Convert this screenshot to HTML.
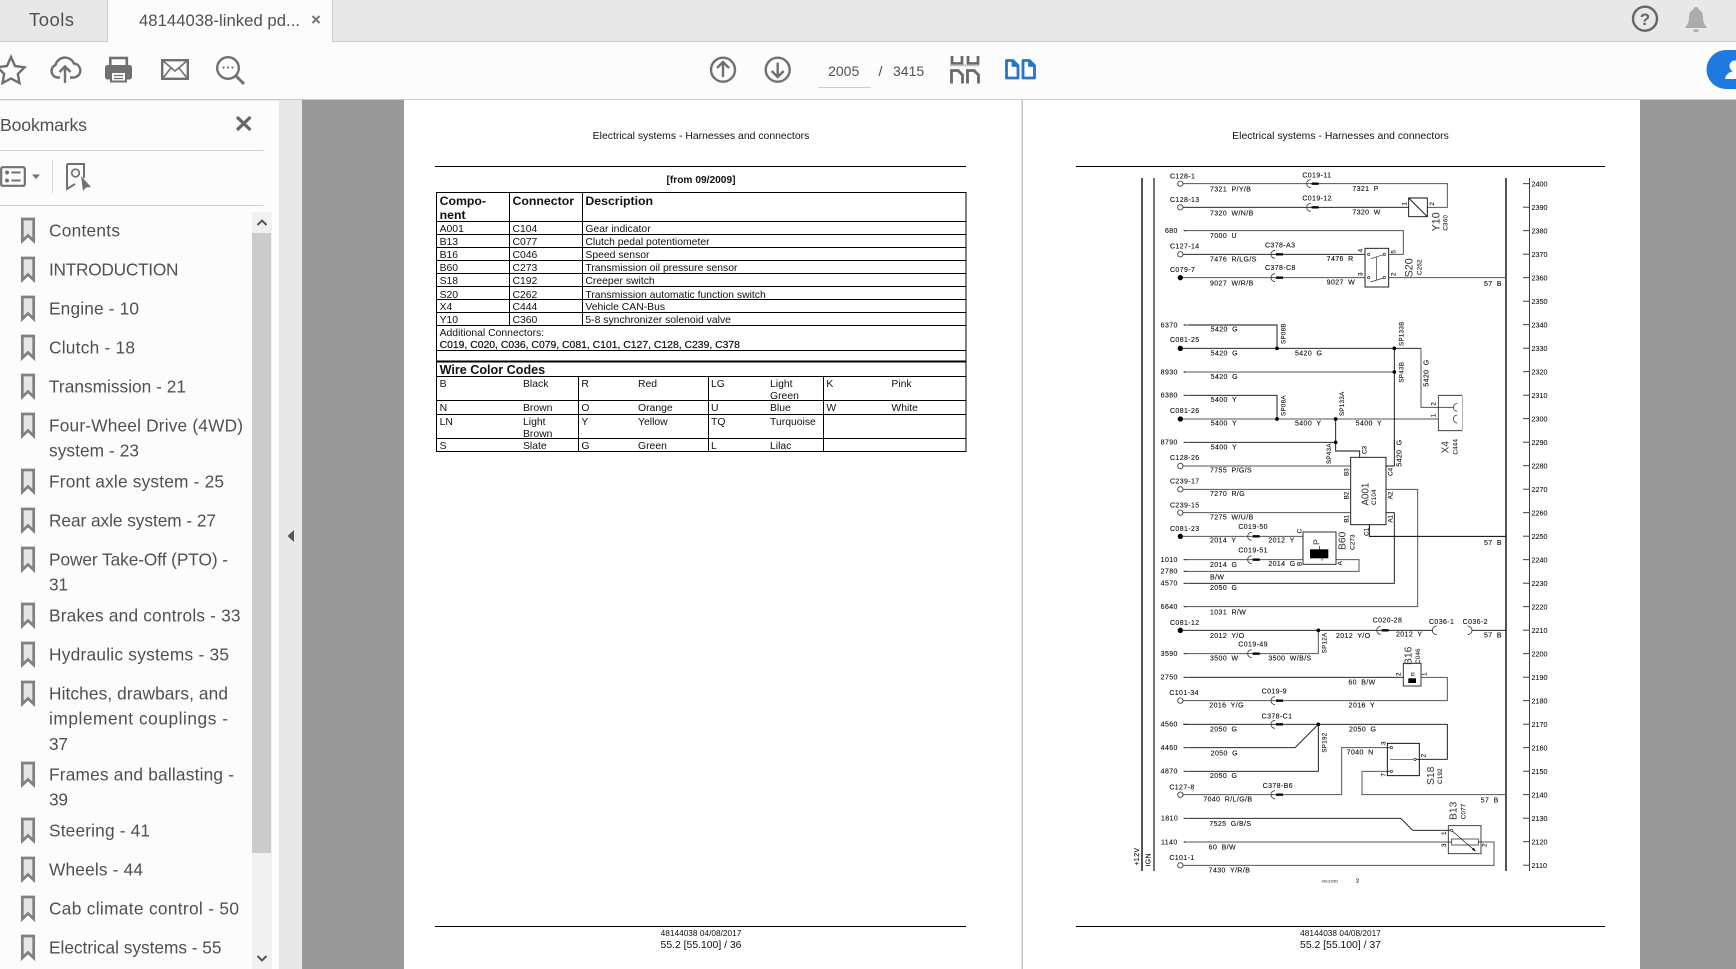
<!DOCTYPE html>
<html lang="en"><head><meta charset="utf-8"><title>48144038-linked pdf</title>
<style>
html,body{margin:0;padding:0;width:1736px;height:969px;overflow:hidden;background:#fcfcfc}
svg{display:block;position:absolute;left:0;top:0;font-family:"Liberation Sans",Arial,sans-serif}
.ui{fill:#505050}
.s{font-size:17.3px;fill:#505050}
.d{fill:none;stroke:#707070;stroke-width:2.4}
.doc{fill:#111;font-size:10.4px}
.b{font-weight:bold}
.g{fill:none;stroke:#555;stroke-width:3}
.k{fill:none;stroke:#0a0a0a;stroke-width:2.7}
.w text{font-size:21px;letter-spacing:1.2px;word-spacing:6px;fill:#111;stroke:#111;stroke-width:.35}
.w text.big{font-size:32px;letter-spacing:0;fill:#333;stroke:none}
.w text.sm{font-size:19px;letter-spacing:.4px;stroke-width:.2}
.w text.pin{font-size:19px;letter-spacing:0}
.w text.sp{font-size:18.5px;letter-spacing:1px;word-spacing:0}
.tick text{font-size:7.2px;fill:#111;stroke:#111;stroke-width:.08}
</style></head><body>
<svg width="1736" height="969" viewBox="0 0 1736 969" xmlns="http://www.w3.org/2000/svg">
<defs>
<g id="conn"><path d="M12 -12A12 12 0 0 0 12 12" fill="none" stroke="#333" stroke-width="2.4"/><rect x="15" y="-3.5" width="21" height="7" fill="#000"/></g>
<path id="arr" d="M0 0L7 -2.5V-1.2H16V1.2H7V2.5Z" fill="#222"/>
<circle id="oc" r="8" fill="#fff" stroke="#333" stroke-width="2.6"/>
<circle id="fc" r="8" fill="#000"/>
<circle id="dot" r="5.5" fill="#000"/>
<circle id="sc" r="3.5" fill="#fff" stroke="#222" stroke-width="2"/>
<path id="bm" d="M22.3 0V22L28 16.5L33.7 22V0Z" fill="#e6e6e6" stroke="#808080" stroke-width="2.7"/>
</defs>

<!-- chrome backgrounds -->
<rect width="1736" height="969" fill="#fcfcfc"/>
<rect width="1736" height="41" fill="#e8e8e8"/>
<rect y="41" width="1736" height="1" fill="#c9c9c9"/>
<rect x="107" y="0" width="1" height="41" fill="#c9c9c9"/>
<rect x="108" y="0" width="224" height="43" fill="#fcfcfc"/>
<rect x="332" y="0" width="1" height="41" fill="#c9c9c9"/>
<rect y="99" width="1736" height="1.4" fill="#c9c9c9"/>

<text x="29" y="26" class="ui" font-size="18.4" textLength="45">Tools</text>
<text x="139" y="26" class="ui" font-size="16.7" textLength="161">48144038-linked pd...</text>
<path d="M312.5 16L319.5 23M319.5 16L312.5 23" stroke="#777" stroke-width="2" fill="none"/>

<!-- help / bell -->
<circle cx="1645" cy="18.7" r="12" fill="none" stroke="#666" stroke-width="2.4"/>
<text x="1645" y="25" text-anchor="middle" font-size="17" font-weight="bold" fill="#666">?</text>
<path d="M1696 7C1698 7 1698.5 8.5 1698.5 9.5C1702 11 1703 14 1703 18C1703 23 1705 24.500 1706.500 27V28H1685.500V27C1687 24.500 1689 23 1689 18C1689 14 1690 11 1693.500 9.500C1693.500 8.500 1694 7 1696 7ZM1693 29.500H1699C1699 31 1698 32 1696 32C1694 32 1693 31 1693 29.500Z" fill="#ababab"/>

<!-- toolbar icons -->
<polygon class="d" points="11,57 15,66 24.500,67.300 17.800,74 19.500,83 11,78.500 2.500,83 4.200,74 -2.500,67.300 7,66" stroke-width="2"/>
<path class="d" d="M60 77.500H58A6.500 6.500 0 0 1 55.500 65A9.800 9.800 0 0 1 74 63.500A7 7 0 0 1 72.500 77.500H70"/>
<path class="d" d="M65 83V67M59.500 72L65 66.500L70.500 72"/>
<rect x="110.300" y="58" width="16.500" height="9" fill="#fcfcfc" stroke="#707070" stroke-width="2.6"/>
<rect x="105" y="65" width="27" height="14.500" rx="2.500" fill="#707070"/>
<rect x="111" y="72" width="15" height="9.500" fill="#fcfcfc" stroke="#707070" stroke-width="2"/>
<path d="M114 75.500H123M114 78.500H123" stroke="#707070" stroke-width="1.2"/>
<rect x="162.200" y="60.200" width="25.600" height="18.600" fill="none" stroke="#707070" stroke-width="2.400"/>
<path d="M162.500 60.500L175 71L187.500 60.500M162.500 78.500L171 68M187.500 78.500L179 68" fill="none" stroke="#707070" stroke-width="1.6"/>
<circle class="d" cx="228" cy="68" r="10.800" stroke-width="2.700"/>
<path d="M236 76L244 84" stroke="#707070" stroke-width="3" fill="none"/>
<circle cx="223.500" cy="67.500" r="1.100" fill="#707070"/><circle cx="228" cy="67.500" r="1.100" fill="#707070"/><circle cx="232.500" cy="67.500" r="1.100" fill="#707070"/>

<circle class="d" cx="723" cy="69.700" r="12" stroke-width="2.700"/>
<path class="d" d="M723 77V62.500M717 68L723 62L729 68" stroke-width="3"/>
<circle class="d" cx="777.700" cy="69.700" r="12" stroke-width="2.700"/>
<path class="d" d="M777.700 62.500V77M771.700 71L777.700 77L783.700 71" stroke-width="3"/>
<text x="843.700" y="76" text-anchor="middle" class="ui" font-size="14">2005</text>
<rect x="818" y="87" width="53" height="1" fill="#cfcfcf"/>
<text x="878.500" y="76" class="ui" font-size="14.200">/</text>
<text x="893" y="76" class="ui" font-size="14">3415</text>
<path d="M952 56V63.500H962V56M968 56V63.500H978V56" fill="none" stroke="#6a6a6a" stroke-width="2.800"/>
<rect x="950" y="64.500" width="29" height="1.800" fill="#c4c4c4"/>
<path d="M951.500 83.500V70.500H958L962.500 75V83.500M967.500 83.500V70.500H974L978.500 75V83.500" fill="none" stroke="#6a6a6a" stroke-width="2.800"/>
<path d="M1006.500 60.500H1013L1018 65.500V78H1006.500ZM1013 60.500V65.500H1018M1023 60.500H1029.500L1034.500 65.500V78H1023ZM1029.500 60.500V65.500H1034.500" fill="none" stroke="#2a74c8" stroke-width="2.800" stroke-linejoin="round"/>
<path d="M1736 50H1726A19.500 19.500 0 0 0 1726 89H1736Z" fill="#1f7ae0"/>
<circle cx="1735" cy="66" r="5.500" fill="#fff"/><path d="M1725 79C1726 73 1731 71 1736 71V79Z" fill="#fff"/>

<!-- sidebar head -->
<text x="0" y="131" class="ui" font-size="17.700" textLength="87">Bookmarks</text>
<path d="M237 117L250.500 130M250.500 117L237 130" stroke="#666" stroke-width="3.200" fill="none"/>
<rect y="150" width="263.500" height="1" fill="#cfcfcf"/>
<rect y="205" width="263.500" height="1" fill="#cfcfcf"/>
<rect x="1.200" y="167.200" width="23.600" height="18.600" rx="1.500" fill="none" stroke="#707070" stroke-width="2.200"/>
<circle cx="7" cy="172.500" r="2" fill="#707070"/><circle cx="7" cy="180.500" r="2" fill="#707070"/>
<path d="M11.500 172.500H20.500M11.500 180.500H20.500" stroke="#707070" stroke-width="2"/>
<polygon points="32,174.500 40,174.500 36,179" fill="#707070"/>
<rect x="52" y="160" width="1" height="33" fill="#d8d8d8"/>
<path d="M67 164H84V178M75 184L67 189V164" fill="none" stroke="#707070" stroke-width="2"/>
<circle cx="75.500" cy="173" r="3.800" fill="none" stroke="#707070" stroke-width="1.700"/>
<polygon points="81,176 91,187 86,187.500 83,191" fill="#707070"/>

<!-- bookmark list -->
<use href="#bm" y="219"/><text x="49" y="236.500" class="s" textLength="71">Contents</text>
<use href="#bm" y="258"/><text x="49" y="275.500" class="s" textLength="129.500">INTRODUCTION</text>
<use href="#bm" y="297"/><text x="49" y="314.500" class="s" textLength="90">Engine - 10</text>
<use href="#bm" y="336"/><text x="49" y="353.500" class="s" textLength="86">Clutch - 18</text>
<use href="#bm" y="375"/><text x="49" y="392.500" class="s" textLength="137">Transmission - 21</text>
<use href="#bm" y="414"/><text x="49" y="431.500" class="s" textLength="194">Four-Wheel Drive (4WD)</text><text x="49" y="456.500" class="s" textLength="90">system - 23</text>
<use href="#bm" y="470"/><text x="49" y="487.500" class="s" textLength="175">Front axle system - 25</text>
<use href="#bm" y="509"/><text x="49" y="526.500" class="s" textLength="167">Rear axle system - 27</text>
<use href="#bm" y="548"/><text x="49" y="565.500" class="s" textLength="179">Power Take-Off (PTO) -</text><text x="49" y="590.500" class="s" textLength="19">31</text>
<use href="#bm" y="604"/><text x="49" y="621.500" class="s" textLength="191.500">Brakes and controls - 33</text>
<use href="#bm" y="643"/><text x="49" y="660.500" class="s" textLength="180">Hydraulic systems - 35</text>
<use href="#bm" y="682"/><text x="49" y="699.500" class="s" textLength="179">Hitches, drawbars, and</text><text x="49" y="724.500" class="s" textLength="179">implement couplings -</text><text x="49" y="750" class="s" textLength="19">37</text>
<use href="#bm" y="763"/><text x="49" y="780.500" class="s" textLength="185">Frames and ballasting -</text><text x="49" y="805.500" class="s" textLength="19">39</text>
<use href="#bm" y="819"/><text x="49" y="836.500" class="s" textLength="101">Steering - 41</text>
<use href="#bm" y="858"/><text x="49" y="875.500" class="s" textLength="94">Wheels - 44</text>
<use href="#bm" y="897"/><text x="49" y="914.500" class="s" textLength="190">Cab climate control - 50</text>
<use href="#bm" y="936"/><text x="49" y="953.500" class="s" textLength="172.500">Electrical systems - 55</text>

<!-- sidebar scrollbar -->
<rect x="252" y="212" width="20" height="757" fill="#f1f1f1"/>
<rect x="252" y="233" width="19" height="620" fill="#cbcbcb"/>
<path d="M257.500 225L262 220.500L266.500 225" fill="none" stroke="#555" stroke-width="2"/>
<path d="M257.500 956L262 960.500L266.500 956" fill="none" stroke="#555" stroke-width="2"/>

<!-- document area -->
<rect x="279" y="100" width="23" height="869" fill="#e8e8e8"/>
<polygon points="287.500,536 294,530 294,542" fill="#555"/>
<rect x="302" y="100" width="102" height="869" fill="#999"/>
<rect x="1640" y="100" width="96" height="869" fill="#999"/>
<rect x="404" y="100" width="1236" height="869" fill="#fff"/>
<rect x="1021.500" y="100" width="1.500" height="869" fill="#c4c4c4"/>

<!-- PAGE 1 -->
<g class="doc">
<text x="701" y="139" text-anchor="middle" font-size="10.430">Electrical systems - Harnesses and connectors</text>
<text x="1340.500" y="139" text-anchor="middle" font-size="10.430">Electrical systems - Harnesses and connectors</text>
<text x="701" y="183" text-anchor="middle" class="b" font-size="10.200">[from 09/2009]</text>
<text x="439.600" y="205" class="b" font-size="12.300">Compo-</text>
<text x="439.600" y="219" class="b" font-size="12.300">nent</text>
<text x="512.500" y="205" class="b" font-size="12.300">Connector</text>
<text x="585.400" y="205" class="b" font-size="12.300">Description</text>
<text x="439.600" y="232">A001</text><text x="512.500" y="232">C104</text><text x="585.400" y="232">Gear indicator</text>
<text x="439.600" y="245">B13</text><text x="512.500" y="245">C077</text><text x="585.400" y="245">Clutch pedal potentiometer</text>
<text x="439.600" y="258">B16</text><text x="512.500" y="258">C046</text><text x="585.400" y="258">Speed sensor</text>
<text x="439.600" y="271">B60</text><text x="512.500" y="271">C273</text><text x="585.400" y="271">Transmission oil pressure sensor</text>
<text x="439.600" y="284">S18</text><text x="512.500" y="284">C192</text><text x="585.400" y="284">Creeper switch</text>
<text x="439.600" y="298">S20</text><text x="512.500" y="298">C262</text><text x="585.400" y="298">Transmission automatic function switch</text>
<text x="439.600" y="310">X4</text><text x="512.500" y="310">C444</text><text x="585.400" y="310">Vehicle CAN-Bus</text>
<text x="439.600" y="323">Y10</text><text x="512.500" y="323">C360</text><text x="585.400" y="323">5-8 synchronizer solenoid valve</text>
<text x="439.600" y="336">Additional Connectors:</text>
<text x="439.600" y="348" stroke="#111" stroke-width=".2">C019, C020, C036, C079, C081, C101, C127, C128, C239, C378</text>
<text x="439.600" y="374" class="b" font-size="12.600">Wire Color Codes</text>
<text x="439.600" y="387">B</text><text x="523" y="387">Black</text><text x="581.400" y="387">R</text><text x="638" y="387">Red</text><text x="711" y="387">LG</text><text x="770" y="387">Light</text><text x="770" y="399">Green</text><text x="826.400" y="387">K</text><text x="891.400" y="387">Pink</text>
<text x="439.600" y="411">N</text><text x="523" y="411">Brown</text><text x="581.400" y="411">O</text><text x="638" y="411">Orange</text><text x="711" y="411">U</text><text x="770" y="411">Blue</text><text x="826.400" y="411">W</text><text x="891.400" y="411">White</text>
<text x="439.600" y="425">LN</text><text x="523" y="425">Light</text><text x="523" y="437">Brown</text><text x="581.400" y="425">Y</text><text x="638" y="425">Yellow</text><text x="711" y="425">TQ</text><text x="770" y="425">Turquoise</text>
<text x="439.600" y="449">S</text><text x="523" y="449">Slate</text><text x="581.400" y="449">G</text><text x="638" y="449">Green</text><text x="711" y="449">L</text><text x="770" y="449">Lilac</text>
<text x="701" y="936" text-anchor="middle" font-size="8.300">48144038 04/08/2017</text>
<text x="701" y="948" text-anchor="middle">55.2 [55.100] / 36</text>
<text x="1340.500" y="936" text-anchor="middle" font-size="8.300">48144038 04/08/2017</text>
<text x="1340.500" y="948" text-anchor="middle">55.2 [55.100] / 37</text>
</g>
<g stroke="#000" stroke-width="1" fill="none">
<path d="M435 166.500H966M1076 166.500H1605M435 926.500H966M1076 926.500H1605"/>
<path d="M436.500 192.500H966V451.500H436.500ZM436.500 221.500H966M436.500 234.500H966M436.500 247.500H966M436.500 260.500H966M436.500 273.500H966M436.500 286.500H966M436.500 299.500H966M436.500 312.500H966M436.500 325.500H966M436.500 350.500H966M436.500 376.500H966M436.500 400.500H966M436.500 414.500H966M436.500 438.500H966"/>
<path d="M509.500 192.500V325.500M582.500 192.500V325.500M578.500 376.500V451.500M708.500 376.500V451.500M823.500 376.500V451.500"/>
<path d="M436.500 361.500H966" stroke-width="2"/>
</g>

<!-- WIRING DIAGRAM -->
<g fill="none" stroke="#2a2a2a">
<path d="M1142 178V871" stroke-width="1.600"/><path d="M1154 178V871" stroke-width="1.300"/><path d="M1506 178V871" stroke-width="1.600"/>
</g>
<g class="tick">
<path d="M1529.500 178V871" stroke="#111" stroke-width=".8" fill="none"/>
<path d="M1523 183.700h6M1523 207.200h6M1523 230.700h6M1523 254.200h6M1523 277.700h6M1523 301.200h6M1523 324.700h6M1523 348.200h6M1523 371.700h6M1523 395.200h6M1523 418.700h6M1523 442.200h6M1523 465.700h6M1523 489.200h6M1523 512.700h6M1523 536.200h6M1523 559.700h6M1523 583.200h6M1523 606.700h6M1523 630.200h6M1523 653.700h6M1523 677.200h6M1523 700.700h6M1523 724.200h6M1523 747.700h6M1523 771.200h6M1523 794.700h6M1523 818.200h6M1523 841.700h6M1523 865.200h6" stroke="#222" stroke-width=".8" fill="none"/>
<text x="1531.500" y="186.300">2400</text><text x="1531.500" y="209.800">2390</text><text x="1531.500" y="233.300">2380</text><text x="1531.500" y="256.800">2370</text><text x="1531.500" y="280.300">2360</text><text x="1531.500" y="303.800">2350</text><text x="1531.500" y="327.300">2340</text><text x="1531.500" y="350.800">2330</text><text x="1531.500" y="374.300">2320</text><text x="1531.500" y="397.800">2310</text><text x="1531.500" y="421.300">2300</text><text x="1531.500" y="444.800">2290</text><text x="1531.500" y="468.300">2280</text><text x="1531.500" y="491.800">2270</text><text x="1531.500" y="515.300">2260</text><text x="1531.500" y="538.800">2250</text><text x="1531.500" y="562.300">2240</text><text x="1531.500" y="585.800">2230</text><text x="1531.500" y="609.300">2220</text><text x="1531.500" y="632.800">2210</text><text x="1531.500" y="656.300">2200</text><text x="1531.500" y="679.800">2190</text><text x="1531.500" y="703.300">2180</text><text x="1531.500" y="726.800">2170</text><text x="1531.500" y="750.300">2160</text><text x="1531.500" y="773.800">2150</text><text x="1531.500" y="797.300">2140</text><text x="1531.500" y="820.800">2130</text><text x="1531.500" y="844.300">2120</text><text x="1531.500" y="867.800">2110</text>
</g>

<!-- group A : upper diagram -->
<g class="w" transform="translate(1120 160) scale(.33333)">
<path class="g" d="M189 71H982V142H922"/>
<path class="k" d="M189 142H866M866 114H922V170H866ZM866 114L922 170"/>
<path class="g" d="M205 212H850V283H806"/>
<path class="k" d="M189 283H735"/>
<path class="g" d="M189 353H735M806 353H1158"/>
<rect x="735" y="265" width="71" height="116" fill="none" stroke="#222" stroke-width="3"/>
<path d="M752 296L790 284M752 366L790 354M770 290V360" stroke="#333" stroke-width="2" fill="none"/>
<use href="#sc" x="746" y="283"/><use href="#sc" x="793" y="283"/><use href="#sc" x="746" y="353"/><use href="#sc" x="793" y="353"/>
<path class="k" d="M205 495H471V565M189 565H903"/>
<path class="g" d="M903 565V742H1000M205 636H823"/>
<path class="k" d="M205 706H471V777"/>
<path class="g" d="M189 777H955"/>
<path class="k" d="M647 777V847M205 847H647"/>
<path class="k" d="M823 565V870" stroke-width="2"/>
<path d="M955 706H1027M955 706V812H1027" fill="none" stroke="#222" stroke-width="2.400"/><path d="M1027 706V812" stroke="#888" stroke-width="2" fill="none"/>
<path d="M1012 730A12 12 0 0 0 1012 754M1012 765A12 12 0 0 0 1012 789" fill="none" stroke="#333" stroke-width="2.200"/>
<use href="#oc" x="181" y="71"/><use href="#oc" x="181" y="142"/><use href="#oc" x="181" y="283"/><use href="#fc" x="181" y="353"/><use href="#fc" x="181" y="565"/><use href="#fc" x="181" y="777"/>
<use href="#dot" x="471" y="565"/><use href="#dot" x="823" y="565"/><use href="#dot" x="823" y="636"/><use href="#dot" x="471" y="777"/><use href="#dot" x="647" y="777"/><use href="#dot" x="647" y="847"/>
<use href="#conn" x="560" y="71"/><use href="#conn" x="560" y="142"/><use href="#conn" x="453" y="283"/><use href="#conn" x="453" y="353"/>
<use href="#arr" x="189" y="212"/><use href="#arr" x="189" y="495"/><use href="#arr" x="189" y="636"/><use href="#arr" x="189" y="706"/><use href="#arr" x="189" y="847"/>
<text x="150" y="56">C128-1</text><text x="547" y="52">C019-11</text><text x="270" y="95">7321 P/Y/B</text><text x="697" y="93">7321 P</text>
<text x="150" y="126">C128-13</text><text x="547" y="122">C019-12</text><text x="270" y="166">7320 W/N/B</text><text x="697" y="163">7320 W</text>
<text x="135" y="219">680</text><text x="270" y="234">7000 U</text>
<text x="150" y="266">C127-14</text><text x="435" y="262">C378-A3</text><text x="270" y="305">7476 R/LG/S</text><text x="620" y="303">7476 R</text>
<text x="150" y="336">C079-7</text><text x="435" y="330">C378-C8</text><text x="270" y="377">9027 W/R/B</text><text x="620" y="374">9027 W</text><text x="1092" y="378">57 B</text>
<text x="122" y="502">6370</text><text x="272" y="514">5420 G</text><text x="150" y="546">C081-25</text><text x="272" y="587">5420 G</text><text x="525" y="587">5420 G</text>
<text x="122" y="643">8930</text><text x="272" y="657">5420 G</text><text x="122" y="713">6380</text><text x="272" y="726">5400 Y</text>
<text x="150" y="759">C081-26</text><text x="272" y="797">5400 Y</text><text x="525" y="797">5400 Y</text><text x="707" y="797">5400 Y</text>
<text x="122" y="854">8790</text><text x="272" y="868">5400 Y</text>
<text class="pin" transform="rotate(-90 860 137)" x="860" y="137">1</text>
<text class="pin" transform="rotate(-90 942 137)" x="942" y="137">2</text>
<text class="big" transform="rotate(-90 958 214)" x="958" y="214">Y10</text>
<text class="sm" transform="rotate(-90 982 212)" x="982" y="212">C360</text>
<text class="pin" transform="rotate(-90 727 277)" x="727" y="277">4</text>
<text class="pin" transform="rotate(-90 826 281)" x="826" y="281">5</text>
<text class="pin" transform="rotate(-90 727 348)" x="727" y="348">3</text>
<text class="pin" transform="rotate(-90 826 348)" x="826" y="348">2</text>
<text class="big" transform="rotate(-90 878 352)" x="878" y="352">S20</text>
<text class="sm" transform="rotate(-90 905 345)" x="905" y="345">C262</text>
<text class="sp" transform="rotate(-90 496 552)" x="496" y="552">SP08B</text>
<text class="sp" transform="rotate(-90 850 558)" x="850" y="558">SP133B</text>
<text class="sp" transform="rotate(-90 850 668)" x="850" y="668">SP43B</text>
<text transform="rotate(-90 925 680)" x="925" y="680">5420 G</text>
<text class="sp" transform="rotate(-90 496 768)" x="496" y="768">SP08A</text>
<text class="sp" transform="rotate(-90 672 768)" x="672" y="768">SP133A</text>
<text class="pin" transform="rotate(-90 947 737)" x="947" y="737">2</text>
<text class="pin" transform="rotate(-90 947 772)" x="947" y="772">1</text>
</g>

<!-- group B : middle diagram -->
<g class="w" transform="translate(1120 440) scale(.33333)">
<path class="k" d="M647 7V33H719V52" stroke-width="2.400"/>
<path class="k" d="M823 0V78H798" stroke-width="2.400"/>
<path class="g" d="M189 78H692"/>
<path class="g" d="M189 148H692M798 148H893V500H205"/>
<path class="g" d="M189 218H692"/>
<path class="k" d="M798 218H823V430H205"/>
<rect x="692" y="52" width="106" height="202" fill="none" stroke="#222" stroke-width="3"/>
<path class="g" d="M189 289H548"/>
<path class="g" d="M205 359H548M648 359H717V394H205"/>
<rect x="549" y="276" width="99" height="97" fill="none" stroke="#333" stroke-width="3"/>
<rect x="570" y="328" width="55" height="27" fill="#000"/>
<path d="M598 318V328M606 355V362" stroke="#000" stroke-width="2"/>
<path d="M748 254V289H1158" fill="none" stroke="#000" stroke-width="3"/>
<path class="k" d="M189 571H938"/>
<path d="M950 558A13 13 0 0 0 950 584M1043 558A13 13 0 0 1 1043 584" fill="none" stroke="#222" stroke-width="2.400"/>
<path class="k" d="M1056 571H1158"/>
<path class="g" d="M205 641H595V571"/>
<path class="k" d="M205 712H850" stroke-width="2.200"/>
<use href="#oc" x="181" y="78"/><use href="#oc" x="181" y="148"/><use href="#oc" x="181" y="218"/><use href="#fc" x="181" y="289"/><use href="#fc" x="181" y="571"/>
<use href="#dot" x="595" y="571"/>
<use href="#conn" x="383" y="289"/><use href="#conn" x="383" y="359"/><use href="#conn" x="383" y="641"/><use href="#conn" x="770" y="571"/>
<use href="#arr" x="189" y="359"/><use href="#arr" x="189" y="394"/><use href="#arr" x="189" y="430"/><use href="#arr" x="189" y="500"/><use href="#arr" x="189" y="641"/><use href="#arr" x="189" y="712"/>
<text x="150" y="60">C128-26</text><text x="270" y="98">7755 P/G/S</text><text x="150" y="131">C239-17</text><text x="270" y="168">7270 R/G</text>
<text x="150" y="202">C239-15</text><text x="270" y="239">7275 W/U/B</text><text x="150" y="273">C081-23</text><text x="355" y="267">C019-50</text>
<text x="270" y="308">2014 Y</text><text x="445" y="307">2012 Y</text><text x="355" y="337">C019-51</text><text x="122" y="366">1010</text>
<text x="270" y="381">2014 G</text><text x="445" y="378">2014 G</text><text x="122" y="401">2780</text><text x="270" y="418">B/W</text>
<text x="122" y="437">4570</text><text x="270" y="450">2050 G</text><text x="122" y="507">6640</text><text x="270" y="523">1031 R/W</text>
<text x="150" y="555">C081-12</text><text x="758" y="548">C020-28</text><text x="927" y="552">C036-1</text><text x="1028" y="552">C036-2</text>
<text x="270" y="594">2012 Y/O</text><text x="648" y="594">2012 Y/O</text><text x="828" y="590">2012 Y</text><text x="1092" y="593">57 B</text><text x="1092" y="315">57 B</text>
<text x="355" y="619">C019-49</text><text x="122" y="648">3590</text><text x="270" y="662">3500 W</text><text x="445" y="662">3500 W/B/S</text><text x="122" y="718">2750</text>
<text class="sp" transform="rotate(-90 633 72)" x="633" y="72">SP43A</text>
<text class="pin" transform="rotate(-90 740 42)" x="740" y="42">C3</text>
<text transform="rotate(-90 845 80)" x="845" y="80">5420 G</text>
<text class="pin" transform="rotate(-90 686 108)" x="686" y="108">B3</text><text class="pin" transform="rotate(-90 686 178)" x="686" y="178">B2</text><text class="pin" transform="rotate(-90 686 248)" x="686" y="248">B1</text>
<text class="pin" transform="rotate(-90 818 108)" x="818" y="108">C4</text><text class="pin" transform="rotate(-90 818 178)" x="818" y="178">A2</text><text class="pin" transform="rotate(-90 818 248)" x="818" y="248">A1</text>
<text class="pin" transform="rotate(-90 746 288)" x="746" y="288">C1</text>
<text class="big" transform="rotate(-90 746 197)" x="746" y="197" style="font-size:29.500px">A001</text>
<text class="sm" transform="rotate(-90 768 195)" x="768" y="195">C104</text>
<text class="pin" transform="rotate(-90 544 280)" x="544" y="280">C</text><text class="pin" transform="rotate(-90 544 378)" x="544" y="378">B</text><text class="pin" transform="rotate(-90 666 376)" x="666" y="376">A</text>
<text class="big" transform="rotate(-90 598 315)" x="598" y="315" style="font-size:26px">P</text>
<text class="big" transform="rotate(-90 676 330)" x="676" y="330" style="font-size:31px">B60</text>
<text class="sm" transform="rotate(-90 704 330)" x="704" y="330">C273</text>
<text class="big" transform="rotate(-90 875 675)" x="875" y="675" style="font-size:31px">B16</text>
<text class="sm" transform="rotate(-90 900 672)" x="900" y="672">C046</text>
<text class="sp" transform="rotate(-90 620 640)" x="620" y="640">SP12A</text>
<text class="big" transform="rotate(-90 985 40)" x="985" y="40" style="font-size:30px">X4</text>
<text class="sm" transform="rotate(-90 1013 44)" x="1013" y="44">C444</text>
<text class="pin" transform="rotate(-90 842 708)" x="842" y="708">2</text><text class="pin" transform="rotate(-90 920 708)" x="920" y="708">1</text>
</g>

<!-- group C : lower diagram -->
<g class="w" transform="translate(1120 670) scale(.33333)">
<path class="g" d="M903 22H982V92H189"/>
<rect x="850" y="-20" width="53" height="68" fill="none" stroke="#333" stroke-width="3"/>
<rect x="865" y="25" width="23" height="14" fill="#000"/>
<text class="pin" transform="rotate(-90 884 18)" x="884" y="18" style="font-size:20px">n</text>
<path class="k" d="M189 163H982V268H885"/>
<path class="k" d="M205 233H525L595 163V304H205" stroke-width="2.400"/>
<path class="g" d="M812 233H665V374H189"/>
<path class="g" d="M810 304H726V374H1158"/>
<rect x="802" y="220" width="96" height="97" fill="none" stroke="#000" stroke-width="2.800"/>
<path d="M810 268H880" stroke="#333" stroke-width="2" fill="none"/>
<use href="#sc" x="814" y="233"/><use href="#sc" x="885" y="268"/><use href="#sc" x="814" y="304"/>
<path class="k" d="M205 445H842L878 481H990" stroke-width="2.400"/>
<path class="g" d="M205 516H1122V586H189"/>
<rect x="985" y="467" width="98" height="84" fill="none" stroke="#333" stroke-width="2.800"/>
<rect x="995" y="507" width="80" height="18" fill="#fff" stroke="#333" stroke-width="2.400"/>
<path d="M998 484L1066 543" stroke="#111" stroke-width="2" fill="none"/><polygon points="1068,545 1056,539 1061,533" fill="#000"/>
<use href="#sc" x="995" y="481"/>
<use href="#oc" x="181" y="92"/><use href="#oc" x="181" y="374"/><use href="#oc" x="181" y="586"/>
<use href="#dot" x="595" y="163"/>
<use href="#conn" x="453" y="92"/><use href="#conn" x="453" y="163"/><use href="#conn" x="453" y="374"/>
<use href="#arr" x="189" y="163"/><use href="#arr" x="189" y="233"/><use href="#arr" x="189" y="304"/><use href="#arr" x="189" y="445"/><use href="#arr" x="189" y="516"/>
<text x="685" y="44">60 B/W</text><text x="148" y="75">C101-34</text><text x="425" y="70">C019-9</text><text x="268" y="113">2016 Y/G</text><text x="686" y="113">2016 Y</text>
<text x="425" y="145">C378-C1</text><text x="122" y="170">4560</text><text x="270" y="185">2050 G</text><text x="687" y="185">2050 G</text>
<text x="122" y="240">4460</text><text x="272" y="257">2050 G</text><text x="680" y="254">7040 N</text><text x="122" y="311">4870</text><text x="270" y="324">2050 G</text>
<text x="148" y="358">C127-8</text><text x="428" y="354">C378-B6</text><text x="250" y="395">7040 R/L/G/B</text><text x="1082" y="397">57 B</text>
<text x="123" y="452">1810</text><text x="268" y="468">7525 G/B/S</text><text x="123" y="523">1140</text><text x="266" y="539">60 B/W</text>
<text x="148" y="570">C101-1</text><text x="266" y="608">7430 Y/R/B</text>
<text class="sp" transform="rotate(-90 619 248)" x="619" y="248">SP192</text>
<text class="pin" transform="rotate(-90 796 225)" x="796" y="225">3</text><text class="pin" transform="rotate(-90 916 262)" x="916" y="262">2</text><text class="pin" transform="rotate(-90 796 320)" x="796" y="320">7</text>
<text class="big" transform="rotate(-90 942 345)" x="942" y="345" style="font-size:31px">S18</text>
<text class="sm" transform="rotate(-90 966 342)" x="966" y="342">C192</text>
<text class="big" transform="rotate(-90 1010 450)" x="1010" y="450" style="font-size:31px">B13</text>
<text class="sm" transform="rotate(-90 1037 448)" x="1037" y="448">C077</text>
<text class="pin" transform="rotate(-90 978 495)" x="978" y="495">1</text><text class="pin" transform="rotate(-90 978 531)" x="978" y="531">3</text><text class="pin" transform="rotate(-90 1100 531)" x="1100" y="531">2</text>
<text transform="rotate(-90 57 587)" x="57" y="587">+12V</text>
<text transform="rotate(-90 92 590)" x="92" y="590">IGN</text>
<text x="605" y="637" style="font-size:11px;letter-spacing:.2px;stroke:none">9913J052</text>
<text x="708" y="638" style="font-size:17px">2</text>
</g>
</svg>
</body></html>
